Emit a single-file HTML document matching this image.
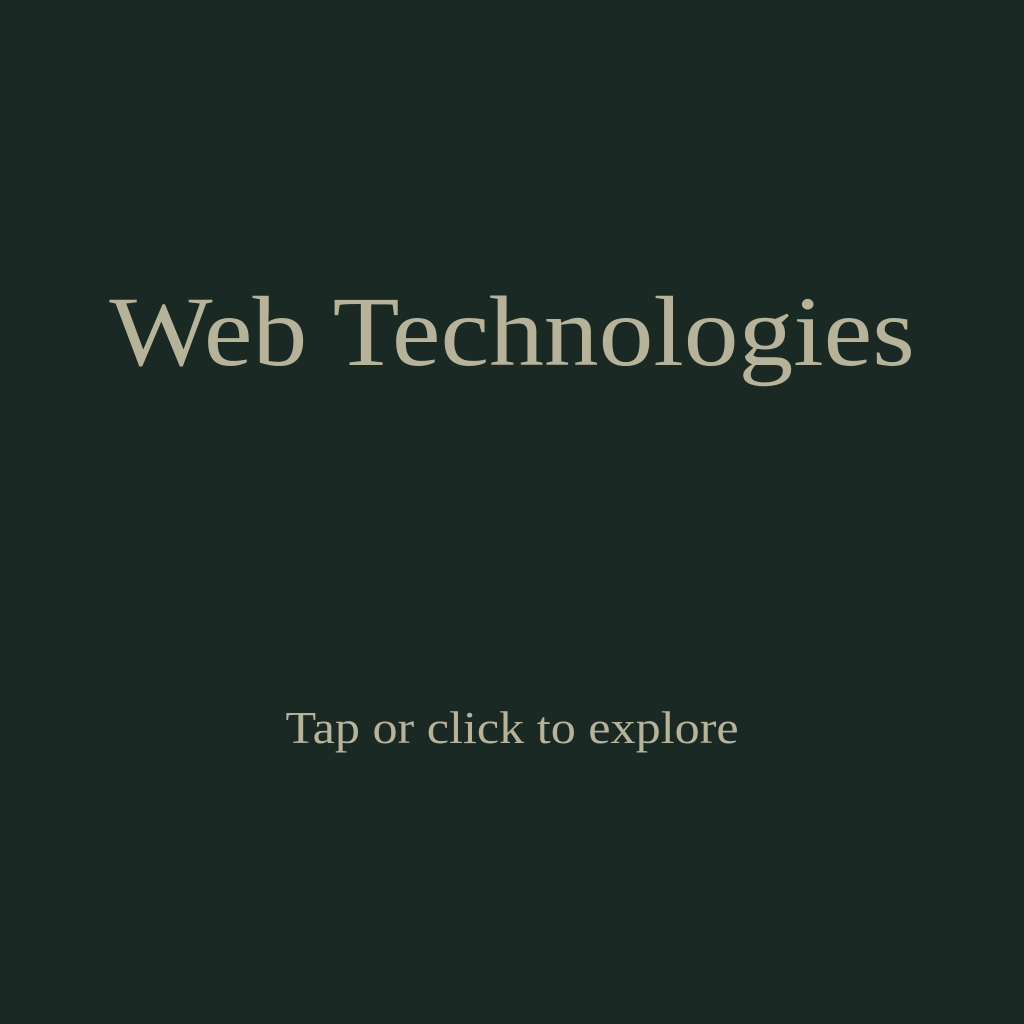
<!DOCTYPE html>
<html><head><meta charset="utf-8"><style>
html,body{margin:0;padding:0;width:1024px;height:1024px;background:#1b2925;overflow:hidden}
.t{position:absolute;left:0;width:1024px;text-align:center;color:#b7b39a;font-family:"Liberation Serif",serif;white-space:nowrap}
#h{top:272px;font-size:100px;letter-spacing:0;line-height:120px;transform:scaleX(1.095);transform-origin:511px 0}
#s{top:700px;font-size:46px;letter-spacing:0;line-height:56px;transform:scaleX(1.09);transform-origin:511px 0}
</style></head><body>
<div class="t" id="h">Web Technologies</div>
<div class="t" id="s">Tap or click to explore</div>
</body></html>
